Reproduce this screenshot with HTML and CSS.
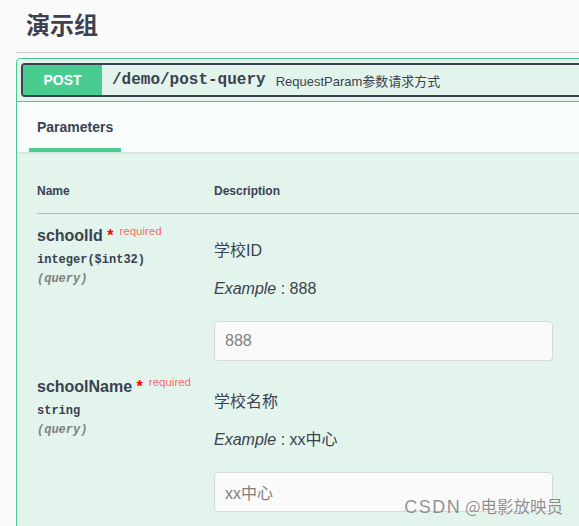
FILE: index.html
```html
<!DOCTYPE html>
<html lang="zh">
<head>
<meta charset="utf-8">
<title>演示组</title>
<link rel="stylesheet" href="styles.css">
</head>
<body>
<div class="frame">
  <div class="tag">
    <h3 class="tag-title">演示组</h3>
  </div>
  <div class="opblock">
    <div class="summary">
      <div class="summary-ctl">
        <span class="method">POST</span>
        <span class="path">/demo/post-query</span>
        <span class="op-desc">RequestParam参数请求方式</span>
      </div>
    </div>
    <div class="sec-header">
      <div class="tab">Parameters</div>
    </div>
    <div class="params">
      <div class="thead">
        <div class="th">Name</div>
        <div class="th">Description</div>
      </div>
      <div class="prow">
        <div class="pcol-name">
          <div class="pname">schoolId<span class="star">&nbsp;*</span><span class="req">required</span></div>
          <div class="ptype">integer($int32)</div>
          <div class="pin">(query)</div>
        </div>
        <div class="pcol-desc">
          <div class="pdesc">学校ID</div>
          <div class="pex"><i>Example</i> : 888</div>
          <input class="pinput" type="text" value="888">
        </div>
      </div>
      <div class="prow">
        <div class="pcol-name">
          <div class="pname">schoolName<span class="star">&nbsp;*</span><span class="req">required</span></div>
          <div class="ptype">string</div>
          <div class="pin">(query)</div>
        </div>
        <div class="pcol-desc">
          <div class="pdesc">学校名称</div>
          <div class="pex"><i>Example</i> : xx中心</div>
          <input class="pinput" type="text" value="xx中心">
        </div>
      </div>
    </div>
  </div>
  <div class="watermark"><span class="wm-latin">CSDN</span> @电影放映员</div>
</div>
</body>
</html>
```
FILE: styles.css
```css
html, body {
  margin: 0;
  padding: 0;
  overflow: hidden;
  background: #fafafa;
}
body {
  font-family: "Liberation Sans", "Noto Sans CJK SC", sans-serif;
  color: #3b4151;
}
.frame {
  width: 579px;
  height: 526px;
  position: relative;
  overflow: hidden;
}
.tag {
  margin: 0 -40px 0 16px;
  padding: 9px 0 13px 10px;
  border-bottom: 1px solid #c9c9c9;
}
.tag-title {
  margin: 0;
  font: 700 24px/30px "Noto Sans CJK SC", sans-serif;
  color: #3b4151;
}
.opblock {
  margin: 5px -40px 0 16px;
  border: 1px solid #49cc90;
  border-radius: 4px;
  background: #e2f4ec;
}
.summary {
  padding: 4px;
  border-bottom: 1px solid #49cc90;
}
.summary-ctl {
  display: flex;
  align-items: center;
  height: 30px;
  border: 2px solid #3b4151;
  border-radius: 4px;
  overflow: hidden;
}
.method {
  flex: none;
  width: 79px;
  height: 30px;
  background: #49cc90;
  color: #fff;
  font: 700 14px/30px "Liberation Sans", sans-serif;
  text-align: center;
}
.path {
  padding: 0 10px;
  font: 700 16px "Liberation Mono", monospace;
  color: #3b4151;
}
.op-desc {
  font-size: 13px;
  color: #3b4151;
}
.sec-header {
  display: flex;
  height: 50px;
  padding-left: 12px;
  background: #f8fdfb;
  box-shadow: 0 1px 2px rgba(0, 0, 0, .1);
  position: relative;
}
.tab {
  box-sizing: border-box;
  height: 50px;
  padding: 4px 8px 0;
  border-bottom: 4px solid #49cc90;
  display: flex;
  align-items: center;
  font-size: 14px;
  font-weight: 700;
}
.params {
  padding: 20px 0 60px 20px;
}
.thead {
  display: grid;
  grid-template-columns: 177px 1fr;
  padding: 12px 0 14px;
  border-bottom: 1px solid rgba(59, 65, 81, .3);
}
.th {
  font-size: 12px;
  line-height: 15px;
  font-weight: 700;
}
.prow {
  display: grid;
  grid-template-columns: 177px 1fr;
  padding: 12px 0 4px;
}
.pname {
  font-size: 16px;
  line-height: 20px;
  font-weight: 700;
}
.star {
  color: red;
}
.req {
  position: relative;
  top: -6px;
  padding-left: 6px;
  font-size: 11.5px;
  font-weight: 400;
  color: rgba(255, 0, 0, .6);
}
.ptype {
  margin-top: 5px;
  font: 700 12px/16px "Liberation Mono", monospace;
}
.pin {
  margin-top: 3px;
  font: italic 700 12px/16px "Liberation Mono", monospace;
  color: #808080;
}
.pdesc {
  margin-top: 15px;
  font-size: 16px;
  line-height: 20px;
}
.pex {
  margin-top: 18px;
  font-size: 16px;
  line-height: 20px;
}
.pinput {
  display: block;
  box-sizing: border-box;
  margin: 22px 0 0;
  width: 339px;
  height: 40px;
  padding: 0 10px;
  border: 1px solid #d9d9d9;
  border-radius: 4px;
  background: #fafafa;
  font: 16px "Liberation Sans", "Noto Sans CJK SC", sans-serif;
  color: #808080;
  outline: none;
}
.watermark {
  position: absolute;
  right: 16px;
  top: 494px;
  font: 400 16.5px/24px "Noto Sans CJK SC", sans-serif;
  color: rgba(100, 100, 100, .72);
  text-shadow: 0 0 2px rgba(255, 255, 255, .8);
  white-space: nowrap;
}
.wm-latin {
  font-family: "Liberation Sans", sans-serif;
  font-size: 18px;
  letter-spacing: 1.5px;
}
```
